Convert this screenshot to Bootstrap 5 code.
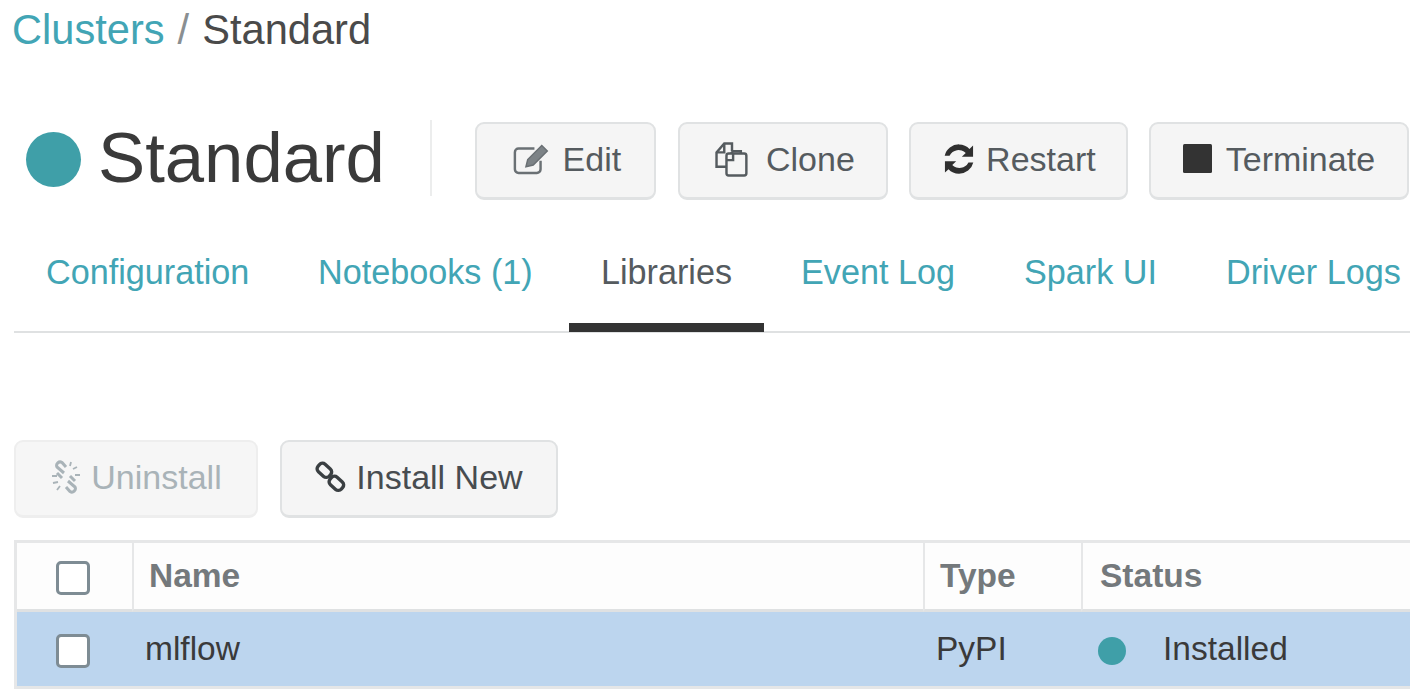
<!DOCTYPE html>
<html lang="en">
<head>
<meta charset="utf-8">
<title>Clusters / Standard</title>
<link href="https://cdn.jsdelivr.net/npm/bootstrap@5.3.0/dist/css/bootstrap.min.css" rel="stylesheet">
<style>
html,body{height:100%;overflow:hidden}
body{font-family:"Liberation Sans",Arial,sans-serif;color:#3d3d3d;background:#fff;padding:0 8px 0 12px}
a{text-decoration:none}
.crumbs{font-size:41.6px;line-height:46px;padding-top:7px;color:#8a8f92;word-spacing:1.5px;height:54px}
.crumbs a{color:#42a5b5}
.crumbs span{color:#4a4a4a}
.head-row{margin-top:66px;height:80px;padding-left:14px}
.state-dot{width:55px;height:55px;border-radius:50%;background:#3f9fa8;margin-right:17px;margin-bottom:2px;flex:none}
.title-txt{font-size:70.7px;line-height:76px;margin:0 0 4px;font-weight:400;color:#3a3a3a;padding-right:45px;border-right:2px solid #eceded;height:76px}
.act{font-size:34px;line-height:38px;color:#555b5f;background:#f5f5f5;border:2px solid #e0e2e3;border-bottom-width:3px;border-radius:9px;height:78px;display:inline-flex;align-items:center;justify-content:center;padding:0 0 3px;flex:none}
.act:hover{background:#f5f5f5;color:#555b5f;border-color:#e0e2e3}
.act svg{flex:none}
.head-row .act{margin-top:2px}
.w-edit{width:181px;margin-left:43px}
.w-clone{width:210px;margin-left:22px}
.w-restart{width:219px;margin-left:21px}
.w-term{width:260px;margin-left:21px}
.w-un{width:244px}
.w-inst{width:278px;margin-left:22px;color:#474c50}
.act.off,.act.off:disabled{color:#a9b3b8;background:#f6f6f6;border-color:#eeeeee;opacity:1}
.gap-m{margin-right:9px}
.gap-l{margin-right:13px}
.tab-bar{margin-top:37px;height:96px;border-bottom:2px solid #dfe1e2;margin-left:2px;flex-wrap:nowrap}
.tab-link{display:block;font-size:34.2px;line-height:40px;color:#42a5b5;padding:15px 0 0;height:95px;white-space:nowrap}
.tab-link:hover{color:#42a5b5}
.tab-link.on,.tab-link.on:hover{color:#555b5f;border-bottom:9px solid #333;text-align:center}
.t1{margin-left:32px;width:201px}
.t2{margin-left:71px;width:215px}
.t3{margin-left:36px;width:195px}
.t4{margin-left:37px;width:154px}
.t5{margin-left:69px;width:132px}
.t6{margin-left:70px;width:174px}
.tool-row{margin-top:107px;margin-left:2px}
.lib-table{margin:22px 0 0 2px;width:1396px;table-layout:fixed;border-collapse:separate;border-spacing:0;font-size:33.5px;border-top:3px solid #e6e7e8;border-left:3px solid #e6e7e8}
.lib-table th,.lib-table td{padding:0;vertical-align:middle}
.lib-table th{height:69px;font-weight:700;color:#74797c;background:#fdfdfd;border-bottom:3px solid #dfe1e2;border-left:2px solid #e6e7e8;padding-left:15px}
.lib-table th:first-child,.lib-table td:first-child{border-left:0;padding:0 0 0 39px}
.lib-table td{height:77px;background:#bcd5ee;color:#3a3a3a;border-bottom:3px solid #e4e6e7;padding-left:13px}
.lib-table th:nth-child(4){padding-left:17px}
.lib-table td:nth-child(4){padding-left:15px}
.fake-check{display:block;width:34px;height:34px;margin:4px 0 0;border:3px solid #7e8c94;border-radius:5px;background:#fff;appearance:none}
.row-dot{display:inline-block;width:28px;height:28px;border-radius:50%;background:#3f9fa8;margin:0 37px 0 2px;vertical-align:-5px}
</style>
</head>
<body>
<div class="crumbs"><a href="#">Clusters</a> / <span>Standard</span></div>

<div class="d-flex align-items-center head-row">
  <div class="state-dot"></div>
  <h1 class="title-txt">Standard</h1>
  <button class="btn act w-edit" type="button">
    <svg width="44" height="37" viewBox="0 0 36 30" class="gap-m" fill="none" stroke="#6a7074" stroke-width="2"><path d="M20 6H7a3 3 0 0 0-3 3v14a3 3 0 0 0 3 3h15a3 3 0 0 0 3-3v-7"/><path d="M13 21l1.500-6L26 3.500l4.500 4.500L19 19.500z" fill="#7d8387" stroke-width="1.200"/></svg>Edit
  </button>
  <button class="btn act w-clone" type="button">
    <svg width="42" height="40" viewBox="0 0 38 36" class="gap-l" fill="none" stroke="#555b5f" stroke-width="2.200"><path d="M14 25H5V12l7-8h7v7"/><path d="M12 4v8H5"/><path d="M14 18l6-7h7v7"/><rect x="14" y="13" width="18" height="20" rx="2" fill="#f5f5f5"/><path d="M20 13v6h-6"/></svg>Clone
  </button>
  <button class="btn act w-restart" type="button">
    <svg width="36" height="36" viewBox="0 0 32 32" class="gap-m" fill="#2f2f2f"><path d="M16 3c3.800 0 7 1.500 9.300 4L28.500 4v10h-10l3.500-3.400A9 9 0 0 0 7.600 13H3.300A13 13 0 0 1 16 3z"/><path d="M16 29c-3.800 0-7-1.500-9.300-4L3.500 28V18h10l-3.500 3.400A9 9 0 0 0 24.400 19h4.300A13 13 0 0 1 16 29z"/></svg>Restart
  </button>
  <button class="btn act w-term" type="button">
    <svg width="30" height="30" viewBox="0 0 30 30" class="gap-l" fill="#333"><rect width="29" height="29" rx="1.500"/></svg>Terminate
  </button>
</div>

<ul class="nav tab-bar">
  <li class="nav-item"><a class="tab-link t1" href="#">Configuration</a></li>
  <li class="nav-item"><a class="tab-link t2" href="#">Notebooks (1)</a></li>
  <li class="nav-item"><a class="tab-link on t3" href="#">Libraries</a></li>
  <li class="nav-item"><a class="tab-link t4" href="#">Event Log</a></li>
  <li class="nav-item"><a class="tab-link t5" href="#">Spark UI</a></li>
  <li class="nav-item"><a class="tab-link t6" href="#">Driver Logs</a></li>
</ul>

<div class="d-flex tool-row">
  <button class="btn act off w-un" type="button" disabled>
    <svg width="32" height="34" viewBox="0 0 32 34" class="gap-m" fill="none" stroke="#a9b3b8" stroke-width="3"><path d="M14 13L7 7a3.500 3.500 0 0 1 5-4.500L16 7"/><path d="M18 21l7 6a3.500 3.500 0 0 1-5 4.500L16 27"/><path d="M20 16l5 5M12 18l-5-5" stroke-width="3"/><path d="M21 2l-1 4M27 7l-4 2M3 23l5-1M7 30l3-4M2 16h5M25 15h5" stroke-width="1.800"/></svg>Uninstall
  </button>
  <button class="btn act w-inst" type="button">
    <svg width="32" height="34" viewBox="0 0 32 34" class="gap-m" fill="none" stroke="#3a3f42" stroke-width="3.400"><rect x="-7" y="-5" width="15" height="10" rx="4" transform="translate(9 10) rotate(42)"/><rect x="-7" y="-5" width="15" height="10" rx="4" transform="translate(21 23) rotate(42)"/></svg>Install New
  </button>
</div>

<table class="lib-table">
  <colgroup><col style="width:115px"><col style="width:791px"><col style="width:158px"><col></colgroup>
  <thead>
    <tr><th><input class="fake-check" type="checkbox" aria-label="Select all"></th><th>Name</th><th>Type</th><th>Status</th></tr>
  </thead>
  <tbody>
    <tr><td><input class="fake-check" type="checkbox" aria-label="Select mlflow"></td><td>mlflow</td><td>PyPI</td><td><span class="row-dot"></span>Installed</td></tr>
  </tbody>
</table>
<script src="https://cdn.jsdelivr.net/npm/bootstrap@5.3.0/dist/js/bootstrap.bundle.min.js"></script>
</body>
</html>
